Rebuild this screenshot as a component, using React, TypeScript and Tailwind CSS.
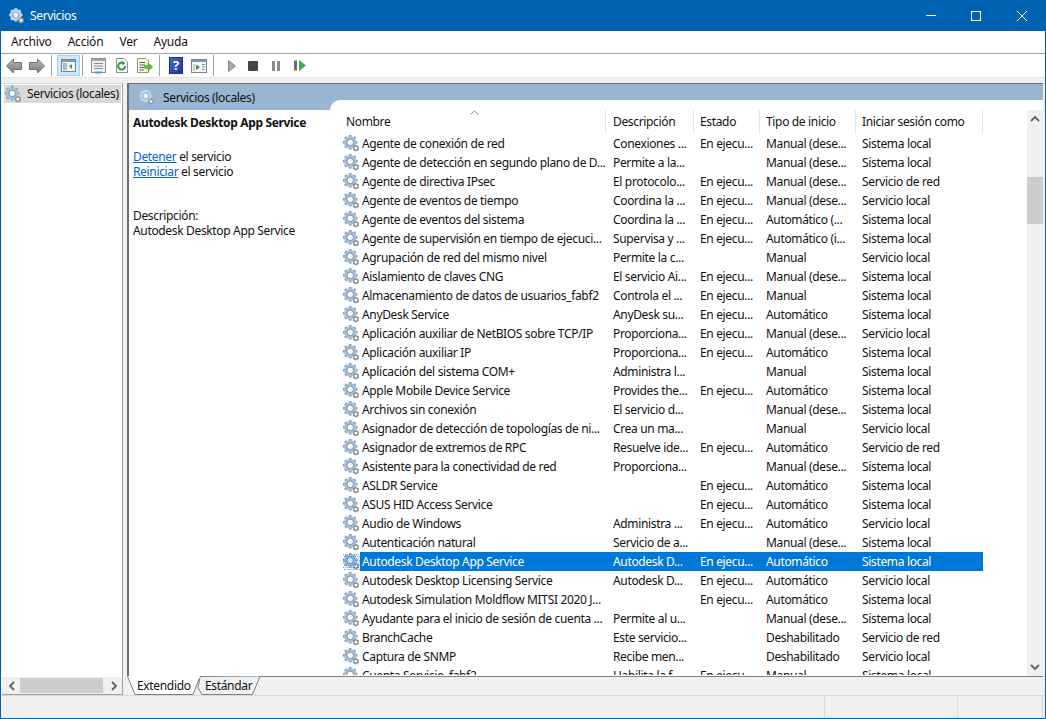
import React from "react";

const rows: [string, string, string, string, string][] = [
  ["Agente de conexión de red", "Conexiones ...", "En ejecu...", "Manual (dese...", "Sistema local"],
  ["Agente de detección en segundo plano de D...", "Permite a la...", "", "Manual (dese...", "Sistema local"],
  ["Agente de directiva IPsec", "El protocolo...", "En ejecu...", "Manual (dese...", "Servicio de red"],
  ["Agente de eventos de tiempo", "Coordina la ...", "En ejecu...", "Manual (dese...", "Servicio local"],
  ["Agente de eventos del sistema", "Coordina la ...", "En ejecu...", "Automático (...", "Sistema local"],
  ["Agente de supervisión en tiempo de ejecuci...", "Supervisa y ...", "En ejecu...", "Automático (i...", "Sistema local"],
  ["Agrupación de red del mismo nivel", "Permite la c...", "", "Manual", "Servicio local"],
  ["Aislamiento de claves CNG", "El servicio Ai...", "En ejecu...", "Manual (dese...", "Sistema local"],
  ["Almacenamiento de datos de usuarios_fabf2", "Controla el ...", "En ejecu...", "Manual", "Sistema local"],
  ["AnyDesk Service", "AnyDesk su...", "En ejecu...", "Automático", "Sistema local"],
  ["Aplicación auxiliar de NetBIOS sobre TCP/IP", "Proporciona...", "En ejecu...", "Manual (dese...", "Servicio local"],
  ["Aplicación auxiliar IP", "Proporciona...", "En ejecu...", "Automático", "Sistema local"],
  ["Aplicación del sistema COM+", "Administra l...", "", "Manual", "Sistema local"],
  ["Apple Mobile Device Service", "Provides the...", "En ejecu...", "Automático", "Sistema local"],
  ["Archivos sin conexión", "El servicio d...", "", "Manual (dese...", "Sistema local"],
  ["Asignador de detección de topologías de ni...", "Crea un ma...", "", "Manual", "Servicio local"],
  ["Asignador de extremos de RPC", "Resuelve ide...", "En ejecu...", "Automático", "Servicio de red"],
  ["Asistente para la conectividad de red", "Proporciona...", "", "Manual (dese...", "Sistema local"],
  ["ASLDR Service", "", "En ejecu...", "Automático", "Sistema local"],
  ["ASUS HID Access Service", "", "En ejecu...", "Automático", "Sistema local"],
  ["Audio de Windows", "Administra ...", "En ejecu...", "Automático", "Servicio local"],
  ["Autenticación natural", "Servicio de a...", "", "Manual (dese...", "Sistema local"],
  ["Autodesk Desktop App Service", "Autodesk D...", "En ejecu...", "Automático", "Sistema local"],
  ["Autodesk Desktop Licensing Service", "Autodesk D...", "En ejecu...", "Automático", "Servicio local"],
  ["Autodesk Simulation Moldflow MITSI 2020 J...", "", "En ejecu...", "Automático", "Sistema local"],
  ["Ayudante para el inicio de sesión de cuenta ...", "Permite al u...", "", "Manual (dese...", "Sistema local"],
  ["BranchCache", "Este servicio...", "", "Deshabilitado", "Servicio de red"],
  ["Captura de SNMP", "Recibe men...", "", "Deshabilitado", "Servicio local"],
  ["Cuenta Servicio_fabf2", "Habilita la f...", "En ejecu...", "Manual", "Sistema local"],
];

function Gear({ size = 17, pale = false, dotted = false }: { size?: number; pale?: boolean; dotted?: boolean }) {
  const teeth = [0, 45, 90, 135, 180, 225, 270, 315];
  const small = [0, 60, 120, 180, 240, 300];
  return (
    <svg width={size} height={size} viewBox="0 0 16 16" className="shrink-0">
      <g>
        {teeth.map((a) => (
          <rect key={a} x="5.5" y="0.1" width="2.6" height="3" fill={pale ? "#a9c6e2" : "#7f9dbb"} transform={`rotate(${a} 6.8 6.9)`} />
        ))}
        <circle cx="6.8" cy="6.9" r="4.5" fill="none" stroke={pale ? "#c3d9ee" : "#a5c0da"} strokeWidth="2.6" />
        <circle cx="6.8" cy="6.9" r="3.1" fill={pale ? "#e8f1f9" : "#ffffff"} stroke={pale ? "#6f8fae" : "#4b6784"} strokeWidth="0.7" />
      </g>
      <g>
        {small.map((a) => (
          <rect key={a} x="11.4" y="9.4" width="1.4" height="1.8" fill="#8a8f96" transform={`rotate(${a} 12.1 12.4)`} />
        ))}
        <circle cx="12.1" cy="12.4" r="2" fill="#fff" stroke="#8f949b" strokeWidth="1.3" />
      </g>
      {dotted &&
        [1, 3, 5, 7, 9, 11, 13, 15].flatMap((y) =>
          [0, 2, 4, 6, 8, 10, 12, 14].map((x) => (
            <rect key={`${x}-${y}`} x={x + (y % 4 === 1 ? 0 : 1)} y={y} width="1" height="1" fill="#0078d7" opacity="0.7" />
          ))
        )}
    </svg>
  );
}

function Sep() {
  return <div className="w-px h-[21px] bg-[#a0a0a0] shrink-0" />;
}

function Arrow({ flip = false }: { flip?: boolean }) {
  const id = flip ? "arrowF" : "arrowB";
  return (
    <svg width="16" height="16" viewBox="0 0 16 16" style={flip ? { transform: "scaleX(-1)" } : undefined}>
      <defs>
        <linearGradient id={id} x1="0" y1="0" x2="0" y2="1">
          <stop offset="0" stopColor="#b8b8b8" />
          <stop offset="1" stopColor="#7c7c7c" />
        </linearGradient>
      </defs>
      <path d="M0.5 8 L7.5 1 V4.5 H15.5 V11.5 H7.5 V15 Z" fill={`url(#${id})`} stroke="#707070" />
    </svg>
  );
}

function Doc({ children }: { children?: React.ReactNode }) {
  return (
    <svg width="17" height="17" viewBox="0 0 17 17" className="shrink-0">
      {children}
    </svg>
  );
}

function Toolbar() {
  return (
    <div className="h-[23px] flex items-center bg-white pl-[5px] shrink-0">
      <Arrow />
      <div className="w-[7px]" />
      <Arrow flip />
      <div className="w-[6px]" />
      <Sep />
      <div className="w-[5px]" />
      <div className="w-[23px] h-[21px] bg-[#cce8ff] border border-[#99d1ff] flex items-center justify-center">
        <Doc>
          <rect x="1.5" y="2.5" width="14" height="12" fill="#f6f6f6" stroke="#7a8490" />
          <rect x="2" y="3" width="13" height="2" fill="#8696a6" />
          <rect x="3.5" y="6.5" width="3" height="6" fill="#a9c6e0" stroke="#7e96ad" strokeWidth="0.6" />
          <path d="M12 7 V12 L9 9.5 Z" fill="#2fa03a" />
        </Doc>
      </div>
      <div className="w-[2px]" />
      <Sep />
      <div className="w-[8px]" />
      <Doc>
        <rect x="0.5" y="1.5" width="14" height="14" fill="#f2f2f2" stroke="#8a8f96" />
        <rect x="1" y="2" width="13" height="2" fill="#9fa7af" />
        <path d="M3 6.5 H12 M3 9 H12 M3 11.5 H12" stroke="#7e8fa3" />
        <rect x="4" y="14.5" width="7" height="2" fill="#38a4e6" />
      </Doc>
      <div className="w-[5px]" />
      <Doc>
        <path d="M3.5 1.5 H11 L14.5 5 V15.5 H3.5 Z" fill="#fff" stroke="#8a8f96" />
        <path d="M12.2 9 A3.5 3.5 0 1 1 10.5 6" fill="none" stroke="#2e9a35" strokeWidth="2" />
        <path d="M9 3.8 L12.5 6 L9.5 8.5 Z" fill="#2e9a35" />
      </Doc>
      <div className="w-[6px]" />
      <Doc>
        <path d="M1.5 1.5 H10 L12.5 4 V15.5 H1.5 Z" fill="#fbf6df" stroke="#98917a" />
        <path d="M3.5 5.5 H9 M3.5 8 H9 M3.5 10.5 H8 M3.5 13 H8" stroke="#53616f" />
        <path d="M8.5 8.5 H12 V6 L16.8 10 L12 14 V11.5 H8.5 Z" fill="#5bbf3a" stroke="#3f962a" strokeWidth="0.5" />
      </Doc>
      <div className="w-[6px]" />
      <Sep />
      <div className="w-[9px]" />
      <div className="w-[14px] h-[17px] bg-gradient-to-br from-[#4668c4] to-[#1f3a94] border border-[#1d2f78] flex items-center justify-center text-white font-bold text-[13px] leading-none">?</div>
      <div className="w-[8px]" />
      <Doc>
        <rect x="0.5" y="2.5" width="15" height="13" fill="#f6f6f6" stroke="#7a8490" />
        <rect x="1" y="3" width="14" height="2" fill="#8696a6" />
        <path d="M5 7.5 V13 L9 10.2 Z" fill="#2fa03a" />
        <path d="M11 7.5 H14 M11 10 H14 M11 12.5 H14" stroke="#7e8fa3" />
        <path d="M3 7 V14" stroke="#9aa5b0" />
      </Doc>
      <div className="w-[5px]" />
      <Sep />
      <div className="w-[14px]" />
      <svg width="8" height="12" viewBox="0 0 8 12"><path d="M0.5 0.5 L7.5 6 L0.5 11.5 Z" fill="#a8a8a8" stroke="#868686" /></svg>
      <div className="w-[12px]" />
      <div className="w-[10px] h-[10px] bg-[#444] rounded-[1px]" />
      <div className="w-[14px]" />
      <div className="flex gap-[2px]">
        <div className="w-[3px] h-[10px] bg-[#8a8a8a]" />
        <div className="w-[3px] h-[10px] bg-[#8a8a8a]" />
      </div>
      <div className="w-[14px]" />
      <svg width="12" height="11" viewBox="0 0 12 11">
        <rect x="0" y="0.5" width="3" height="10" fill="#6c6c6c" />
        <path d="M5 0 L12 5.5 L5 11 Z" fill="#37b24a" />
      </svg>
    </div>
  );
}

function ScrollChevron({ dir }: { dir: "up" | "down" | "left" | "right" }) {
  const d = { up: "M1 6 L5 2 L9 6", down: "M1 2 L5 6 L9 2", left: "M6 1 L2 5 L6 9", right: "M2 1 L6 5 L2 9" }[dir];
  const horiz = dir === "left" || dir === "right";
  return (
    <svg width={horiz ? 8 : 10} height={horiz ? 10 : 8} viewBox={horiz ? "0 0 8 10" : "0 0 10 8"} className="shrink-0">
      <path d={d} fill="none" stroke="#606060" strokeWidth="1.8" />
    </svg>
  );
}

const widths = ["w-[266px]", "w-[88px]", "w-[66px]", "w-[96px]", "w-[127px]"];
const pads = ["pl-[6px]", "pl-[7px]", "pl-[6px]", "pl-[6px]", "pl-[6px]"];

export default function App() {
  return (
    <div
      className="w-[1046px] h-[719px] flex flex-col overflow-hidden bg-[#f0f0f0] border-x border-b border-[#0063b1] text-[12px] text-[#111] tracking-[-0.34px]"
      style={{ fontFamily: '"Noto Sans", "Open Sans", sans-serif' }}
    >
      <div className="h-[31px] bg-[#0063b1] flex items-center text-white shrink-0 -mx-px">
        <div className="ml-[9px] mr-[5px]"><Gear size={16} pale /></div>
        <span>Servicios</span>
        <div className="ml-auto flex items-center mr-px">
          <div className="w-[45px] h-[31px] flex items-center justify-center">
            <div className="w-[10px] h-px bg-white" />
          </div>
          <div className="w-[46px] h-[31px] flex items-center justify-center">
            <div className="w-[10px] h-[10px] border border-white" />
          </div>
          <div className="w-[46px] h-[31px] flex items-center justify-center">
            <svg width="10" height="10" viewBox="0 0 10 10"><path d="M0 0 L10 10 M10 0 L0 10" stroke="#fff" strokeWidth="1" /></svg>
          </div>
        </div>
      </div>

      <div className="h-[23px] bg-white border-b border-[#a0a0a8] flex items-center pl-[10px] gap-[16px] shrink-0 tracking-[-0.2px]">
        <span>Archivo</span>
        <span>Acción</span>
        <span>Ver</span>
        <span>Ayuda</span>
      </div>

      <Toolbar />

      <div className="h-[6px] bg-[#f0f0f0] border-t border-[#e3e3e3] shrink-0" />

      <div className="flex-1 min-h-0 flex bg-[#f0f0f0]">
        <div className="ml-px w-[121px] bg-white border-r border-b border-t border-r-[#a0a0a0] border-b-[#a0a0a0] border-t-[#d9d9d9] flex flex-col shrink-0">
          <div className="flex-1 pt-px pl-[2px]">
            <div className="h-[18px] w-[117px] bg-[#d9d9d9] flex items-center pl-px gap-[5px] whitespace-nowrap">
              <Gear size={17} />
              <span>Servicios (locales)</span>
            </div>
          </div>
          <div className="h-[17px] bg-[#f0f0f0] flex items-center pl-[6px]">
            <ScrollChevron dir="left" />
            <div className="ml-[4px] w-[83px] h-[15px] bg-[#cdcdcd] shrink-0" />
            <div className="ml-[7px]"><ScrollChevron dir="right" /></div>
          </div>
        </div>

        <div className="ml-[4px] flex-1 min-w-0 flex flex-col mr-[2px]">
          <div className="h-[593px] border-l-2 border-t border-[#6d6d6d] bg-white relative flex flex-col shrink-0">
            <div className="h-[26px] bg-[#9ab5d2] flex items-center pl-[10px] gap-[8px] shrink-0">
              <Gear size={16} pale />
              <span className="pt-[2px]">Servicios (locales)</span>
            </div>
            <div className="flex-1 min-h-0 flex">
              <div className="w-[201px] pl-[4px] shrink-0">
                <div className="font-bold pt-[4px] leading-[18px] whitespace-nowrap">Autodesk Desktop App Service</div>
                <div className="mt-[17px] leading-[15px]">
                  <div><span className="text-[#0066cc] underline">Detener</span> el servicio</div>
                  <div><span className="text-[#0066cc] underline">Reiniciar</span> el servicio</div>
                </div>
                <div className="mt-[29px] leading-[15px] whitespace-nowrap">
                  <div>Descripción:</div>
                  <div>Autodesk Desktop App Service</div>
                </div>
              </div>
            </div>
            {/* list overlaps the blue band with its rounded corner */}
            <div className="absolute left-[201px] right-0 top-[16px] bottom-0 bg-white rounded-tl-[10px] overflow-hidden flex">
              <div className="w-[697px] pl-[10px] shrink-0 overflow-hidden mb-px">
                <div className="h-[34px] pt-[10px] flex relative">
                  <svg className="absolute left-[130px] top-[10px]" width="9" height="5" viewBox="0 0 9 5"><path d="M0.5 4.5 L4.5 0.8 L8.5 4.5" fill="none" stroke="#8a8a8a" /></svg>
                  {["Nombre", "Descripción", "Estado", "Tipo de inicio", "Iniciar sesión como"].map((h, i) => (
                    <div key={h} className={`${widths[i]} h-[24px] flex items-center ${pads[i]} border-r border-[#e5e5e5] whitespace-nowrap shrink-0`}>{h}</div>
                  ))}
                </div>
                {rows.map((r, i) => {
                  const sel = i === 22;
                  return (
                    <div key={i} className="h-[19px] flex items-center relative whitespace-nowrap">
                      <div className="absolute left-[3px] top-px"><Gear dotted={sel} size={17} /></div>
                      <div className={`ml-[20px] flex h-[19px] items-center ${sel ? "bg-[#0078d7] text-white" : ""}`}>
                        <div className="w-[246px] pl-[2px] overflow-hidden">{r[0]}</div>
                        <div className={`${widths[1]} ${pads[1]}`}>{r[1]}</div>
                        <div className={`${widths[2]} ${pads[2]}`}>{r[2]}</div>
                        <div className={`${widths[3]} ${pads[3]}`}>{r[3]}</div>
                        <div className={`${widths[4]} ${pads[4]}`}>{r[4]}</div>
                      </div>
                    </div>
                  );
                })}
              </div>
              <div className="ml-auto w-[16px] mt-[10px] bg-[#f0f0f0] flex flex-col items-center py-[5px] shrink-0">
                <ScrollChevron dir="up" />
                <div className="mt-[54px] w-[16px] h-[47px] bg-[#cdcdcd] shrink-0" />
                <div className="mt-auto"><ScrollChevron dir="down" /></div>
              </div>
            </div>
          </div>
          <div className="flex-1 min-h-0 relative border-t border-[#808080]">
            <svg className="absolute left-0 -top-px" width="140" height="19" viewBox="0 0 140 19">
              <path d="M73 1 L71 12 L75 18.5 H125.5 L133 0.5 Z" fill="#f0f0f0" />
              <path d="M73 1 L71 12 L75 18.5 H125.5 L133 0.5" fill="none" stroke="#808080" />
              <path d="M0 0 H73 L66 18.5 H8 Z" fill="#fff" />
              <path d="M0.5 0.5 L8 18.5 H66 L72 3" fill="none" stroke="#808080" />
            </svg>
            <span className="absolute left-[10px] top-0 leading-[18px]">Extendido</span>
            <span className="absolute left-[78px] top-0 leading-[18px]">Estándar</span>
          </div>
        </div>
      </div>

      <div className="h-[23px] border-t border-[#d9d9d9] flex justify-end shrink-0 bg-[#f0f0f0]">
        <div className="w-[133px] border-l border-[#d9d9d9]" />
        <div className="w-[85px] border-l border-[#d9d9d9]" />
        <div className="w-[3px] border-l border-[#d9d9d9]" />
      </div>
    </div>
  );
}
